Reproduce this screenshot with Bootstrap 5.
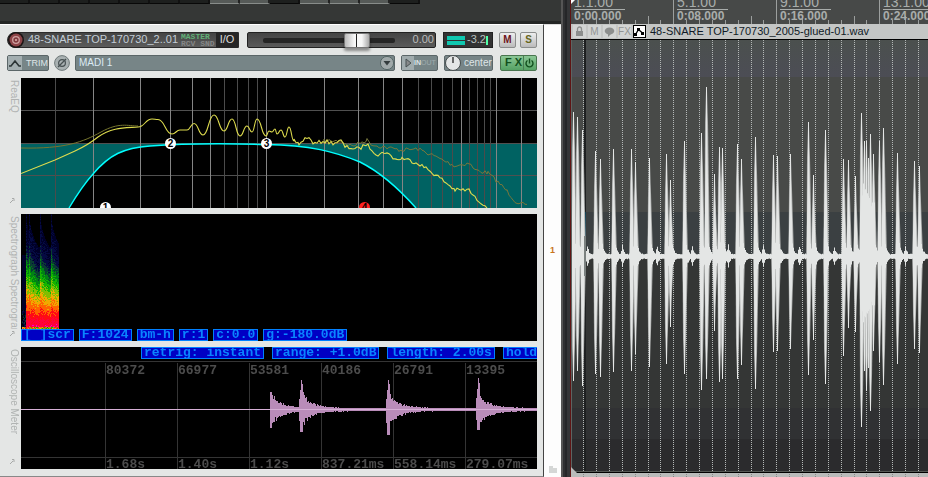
<!DOCTYPE html>
<html lang="en">
<head>
<meta charset="utf-8">
<meta name="viewport" content="width=device-width, initial-scale=1">
<title>48-SNARE TOP</title>
<link href="https://cdn.jsdelivr.net/npm/bootstrap@5.3.0/dist/css/bootstrap.min.css" rel="stylesheet">
<style>
body{font-family:"Liberation Sans",Arial,sans-serif;font-size:11px;line-height:1.2;background:#333534;overflow:hidden}
svg{display:block}
button,select{font:inherit;border:0;padding:0}
.daw{display:grid;grid-template-columns:minmax(0,561fr) 10px minmax(0,357fr);min-height:100vh}
.topbar{height:24px;background:#353736;border-bottom:3px solid #242625}
.cells span{width:30px;height:4px;background:#1d1f1e;border-right:2px solid #111;border-bottom:1px solid #080808}
.cells span.lit{background:#565a58;border-right-color:#222;border-bottom-color:#888c8a}
.tcp{background:#e4e6e5;border-right:1px solid #444;border-bottom:1px solid #888;padding:7px 6px 7px 7px;border-top:1px solid #fff}
.ctl{height:16px}
.row-a{margin-bottom:7px}
.row-b{margin-bottom:7px}
.namebox{width:232px;background:linear-gradient(#444,#5c5c5c);border:1px solid #2c2c2c;border-radius:8px 0 0 8px;color:#c3cdd6}
.rec{width:16px;height:16px;border-radius:50%;background:#1b1414}
.pix{font:bold 8px/7px "Liberation Mono",monospace;color:#62b077;width:35px;white-space:nowrap}
.pix span{color:#858787}
.io{width:22px;height:16px;background:#262626;color:#dcdcdc}
.fader{background:linear-gradient(#444,#5a5a5a);border:1px solid #222;border-radius:2px;padding-left:15px;color:#bcbcbc;padding-right:1px}
.fader input{appearance:none;background:transparent;width:132px;height:16px;margin:0}
.fader input::-webkit-slider-runnable-track{height:5px;background:#252525;border-radius:2px}
.fader input::-webkit-slider-thumb{appearance:none;width:26px;height:15px;margin-top:-5px;border:1px solid #777;border-radius:2px;background:linear-gradient(90deg,#bbb,#f7f7f7 40%,#f7f7f7 46%,#222 47%,#222 51%,#f7f7f7 52%,#f7f7f7 70%,#aaa);box-shadow:0 3px 3px rgba(0,0,0,.4)}
.meter{width:50px;background:#333;border:1px solid #222;color:#b9c1c1;padding:0 4px 0 3px;margin:0 6px 0 7px}
.meter i{width:18px;height:9px;flex:none;background:linear-gradient(#10c8b0 44%,#333 44%,#333 56%,#10c8b0 56%)}
.meter b{width:2px;height:9px;flex:none;background:#4fffa8}
.sq{width:17px;border:1px solid #8b8d8c;border-radius:2px;background:linear-gradient(#eee,#bbb);font-weight:bold;font-size:10px}
.sq.mute{color:#6d1420}.sq.solo{color:#66661c}
.grey{background:#778587;border:1px solid #5b6668;border-radius:2px;color:#dfe6e7;font-size:10px}
.grey svg{flex:none}
.trim{width:42px;font-size:9px}
.trim svg{background:#a3aeb0}
.inout{width:37px;margin:0 6px;font-size:7px}
.outlbl{opacity:.4}
.inselect{appearance:none;width:100%;background:transparent;color:#dceaf3;padding-left:3px;outline:0}
.inarrow{position:absolute;right:0;top:0;pointer-events:none}
.centre{width:49px}
.pl2{padding-left:2px}
.fx{width:37px;margin-left:7px;background:linear-gradient(#8bc795,#55a264);border:1px solid #49754f;border-radius:2px;color:#12501d;font-weight:bold}
.plots{gap:6px}
.plot{background:#000;overflow:hidden}
.side{width:14px;padding:2px 0 3px;color:#b0b3b2;font-size:10px}
.side span{writing-mode:vertical-rl;line-height:14px;white-space:nowrap;overflow:hidden;min-height:0}
.side svg{flex:none}
.p-eq{height:130px}.p-sp{height:127px}.p-os{height:122px}
.tags-a{gap:5px}
.tags-b{gap:8px;padding-left:120px}
.term{font:bold 13px/10px "Liberation Mono","Courier New",monospace;background:#0000c4;border:1px solid #0080ff;color:#0a84ff;height:12px;padding:0 2px;white-space:pre;flex:none}
.mono{font:bold 13px "Liberation Mono",monospace;fill:#4c4c4c}
.num{width:17px;background:#fdfdfd;color:#c8741c;font-weight:bold;font-size:9px;border-top:1px solid #ddd;padding-bottom:1px}
.split{background:linear-gradient(90deg,#555 0 2px,#2f3032 2px 4px,#252628 4px 6px,#343537 6px 9px,#5e1414 9px)}
.ruler{height:24px;background:#474948;overflow:hidden}
.ruler text{font-family:"Liberation Sans",sans-serif;fill:#a9adab}
.itemhead{height:15px;background:#c4c6c5;color:#101a26;gap:2px;padding-left:2px;white-space:nowrap;overflow:hidden}
.chip{width:13px;height:13px;flex:none;background:#d2d4d3;color:#929493;line-height:13px;text-align:center;font-size:10px}
.chip.on{background:#fff;border:1px solid #000}
.wave{border-top:1px solid #000;overflow:hidden}
</style>
<script src="https://cdn.jsdelivr.net/npm/bootstrap@5.3.0/dist/js/bootstrap.bundle.min.js"></script>
</head>
<body>
<main class="daw">
<section class="d-flex flex-column">
  <div class="topbar"><div class="cells d-flex"><span></span><span></span><span></span><span></span><span></span><span></span><span></span><span class="lit"></span><span class="lit"></span><span></span><span class="lit"></span><span class="lit"></span><span class="lit"></span><span></span></div></div>
  <div class="d-flex flex-grow-1">
    <div class="tcp flex-grow-1 d-flex flex-column">
      <div class="row-a d-flex align-items-center">
        <div class="namebox ctl d-flex align-items-center">
          <button class="rec flex-shrink-0" aria-label="Record arm"><svg width="16" height="16" viewBox="0 0 16 16"><circle cx="8" cy="8" r="6.5" fill="#8d4347"/><circle cx="8" cy="8" r="3.3" fill="#823b3f" stroke="#cfa0a0" stroke-width="1.3"/><circle cx="8" cy="8" r="1" fill="#e0b8b8"/></svg></button>
          <span class="flex-grow-1 ps-1 text-nowrap">48-SNARE TOP-170730_2..01</span>
          <span class="pix">MASTER<br><span>RCV SND</span></span>
          <button class="io">I/O</button>
        </div>
        <div class="fader ctl flex-grow-1 d-flex align-items-center justify-content-between ms-2"><input type="range" min="0" max="100" value="76" aria-label="Volume"><span>0.00</span></div>
        <div class="meter ctl d-flex align-items-center"><i></i><span class="pl2">-3.2</span><b></b></div>
        <button class="sq mute ctl me-1">M</button><button class="sq solo ctl">S</button>
      </div>
      <div class="row-b d-flex align-items-center">
        <button class="grey trim ctl d-flex align-items-center"><svg width="14" height="14" viewBox="0 0 14 14"><path d="M1 10h2l4-5 4 5h2" fill="none" stroke="#2b3435" stroke-width="1.6"/></svg><span class="ps-1">TRIM</span></button>
        <button class="bg-transparent mx-1" aria-label="Phase"><svg width="18" height="16" viewBox="0 0 18 16"><circle cx="9" cy="8" r="7.4" fill="#a9b1b2" stroke="#6f797a"/><circle cx="9" cy="8" r="3.4" fill="none" stroke="#475052" stroke-width="1.2"/><path d="M5 12l8-8" stroke="#475052" stroke-width="1.2"/></svg></button>
        <div class="grey ctl flex-grow-1 position-relative d-flex"><select class="inselect" aria-label="Input"><option>MADI 1</option></select><svg class="inarrow" width="14" height="14" viewBox="0 0 14 14"><circle cx="7" cy="7" r="6.6" fill="#a0a9aa" stroke="#566"/><path d="M3.5 5h7l-3.500 4.500z" fill="#333c3d"/></svg></div>
        <button class="grey inout ctl d-flex align-items-center"><svg width="12" height="14" viewBox="1 0 12 14"><path fill="#a0abad" d="M0 0h14v14H0z"/><path d="M5 3l5 4-5 4z" fill="#87898a" stroke="#475052"/></svg><b>IN</b><span class="outlbl">OUT</span></button>
        <div class="grey centre ctl d-flex align-items-center"><svg width="17" height="16" viewBox="0 0 17 16"><circle cx="8" cy="8" r="7.500" fill="#e4e6e6" stroke="#474d4e"/><path d="M8 2v6" stroke="#111" stroke-width="1.2"/></svg><span class="pl2">center</span></div>
        <button class="fx ctl d-flex align-items-center justify-content-between"><span class="ps-1">F X</span><svg width="13" height="14" viewBox="0 0 13 14"><path d="M.5 0v14" stroke="#497d52"/><path d="M4.500 4.500a3.500 3.500 0 1 0 4 0M6.500 2.500v5" fill="none" stroke="#12501d" stroke-width="1.4"/></svg></button>
      </div>
      <div class="plots d-flex flex-column flex-grow-1">
        <div class="p-eq d-flex">
          <div class="side d-flex flex-column justify-content-between"><span>ReaEQ</span><svg width="10" height="9" viewBox="0 0 10 9"><path d="M3 7l3-3M5 2.500h2V5" stroke="#a7a9a8" fill="none"/></svg></div>
          <div class="plot flex-grow-1"><svg id="eq" width="100%" height="130" viewBox="21 78 516 130" preserveAspectRatio="xMinYMin slice"></svg></div>
        </div>
        <div class="p-sp d-flex">
          <div class="side d-flex flex-column justify-content-between"><span>Spectrograph Spectrogram</span><svg width="10" height="9" viewBox="0 0 10 9"><path d="M3 7l3-3M5 2.500h2V5" stroke="#a7a9a8" fill="none"/></svg></div>
          <div class="plot flex-grow-1 d-flex flex-column justify-content-between align-items-start"><canvas id="spec" width="38" height="115"></canvas>
            <div class="tags-a d-flex"><button class="term">[ ]scr</button><button class="term">F:1024</button><button class="term">bm-h</button><button class="term">r:1</button><button class="term">c:0.0</button><button class="term">g:-180.0dB</button></div></div>
        </div>
        <div class="p-os d-flex">
          <div class="side d-flex flex-column justify-content-between"><span>Oscilloscope Meter</span><svg width="10" height="9" viewBox="0 0 10 9"><path d="M3 7l3-3M5 2.500h2V5" stroke="#a7a9a8" fill="none"/></svg></div>
          <div class="plot w-0 flex-grow-1 d-flex flex-column" style="width:0"><div class="tags-b d-flex"><button class="term">retrig: instant</button><button class="term">range: +1.0dB</button><button class="term">length: 2.00s</button><button class="term">hold</button></div>
            <svg id="osc" width="100%" height="110" viewBox="21 359 516 110" preserveAspectRatio="xMinYMin slice"></svg></div>
        </div>
      </div>
    </div>
    <div class="num d-flex flex-column align-items-center justify-content-between"><svg width="8" height="10"></svg><span>1</span><svg width="8" height="10" viewBox="0 0 8 10"><path d="M0 0h4v2h4v5H0z" fill="#d5d7d6"/></svg></div>
  </div>
</section>
<div class="split"></div>
<section class="d-flex flex-column">
  <div class="ruler"><svg id="ruler" width="100%" height="24" viewBox="571 0 357 24" preserveAspectRatio="xMinYMin slice"></svg></div>
  <div class="itemhead d-flex align-items-center">
    <span class="chip"><svg width="13" height="13" viewBox="0 0 13 13"><path d="M3 6h7v5H3z" fill="#8c8e8d"/><path d="M4.500 6V4a2 2 0 0 1 4 0v2" fill="none" stroke="#8c8e8d" stroke-width="1.3"/></svg></span><span class="chip">M</span><span class="chip"><svg width="13" height="13" viewBox="0 0 13 13"><ellipse cx="6.500" cy="6" rx="4.800" ry="3.500" fill="#8c8e8d"/><path d="M5 8v4l4-4z" fill="#8c8e8d"/></svg></span><span class="chip">FX</span><span class="chip on"><svg width="11" height="11" viewBox="0 0 11 11"><path d="M1.500 8.500l3-5 4 3.500" stroke="#000" stroke-width="1.300" fill="none"/><path d="M0 7h3v3H0zM3 2h3v3H3zM7 6h3v3H7z"/></svg></span><span class="pl2">48-SNARE TOP-170730_2005-glued-01.wav</span>
  </div>
  <div class="wave flex-grow-1 d-flex"><svg id="wave" width="100%" height="437" viewBox="571 40 357 437" preserveAspectRatio="xMinYMin slice"></svg></div>
</section>
</main>
<script>
const $=id=>document.getElementById(id);
let seed=7;const rnd=()=>(seed=(seed*16807)%2147483647)/2147483647;
const rect=(x,y,w,h,f,o='')=>`<rect x="${x}" y="${y}" width="${w}" height="${h}" fill="${f}" ${o}/>`;

// Equaliser
{
 const curve='C75 198 84 184 93 174C110 154 124 148 150 146C190 143 230 143.500 266 144.500C310 145 335 152 360 162C380 172 400 190 416 208';
 let s=`<path d="M21 143H537V208H416C400 190 380 172 360 162C335 152 310 145 266 144.500C230 143.500 190 143 150 146C124 148 110 154 93 174C84 184 75 198 69 208H21Z" fill="#006262"/>`;
 [110,143,175].forEach(y=>s+=rect(21,y,516,1,'#505050'));
 [55,224,237,248,257,418,431,442,452,469,477,484,490].forEach(x=>s+=rect(x,78,1,130,'#4b4b4b'));
 [93,140,170,192,210,266,324,358,383,402,461,496,521].forEach(x=>s+=rect(x,78,1,130,'#858585'));
 const smooth=p=>{let d='';for(let i=1;i<p.length;i++){const[a,b]=p[i-1],[c,e]=p[i],m=(a+c)/2;d+=`C${m} ${b} ${m} ${e} ${c} ${e}`}return d};
 const rough=p=>{let d='';for(let i=1;i<p.length;i++){const[a,b]=p[i-1],[c,e]=p[i];for(let x=a;x<c;x+=2)d+=`L${x} ${b+(e-b)*(x-a)/(c-a)+(rnd()-.5)*4}`}return d};
 const mid=[[138,127],[152,119],[158,119.5],[172,134],[180,130],[187,130],[194,123.5],[203,135],[214,115],[224,131],[232,119],[240,136],[247,126],[252,132],[257,119],[266,136],[269,131],[272,132],[275,129],[277,134],[281,130],[285,137],[289,127],[294,141]];
 const tail=[[294,141],[299,144],[307,137],[315,144],[323,141],[333,143],[341,141],[345,147],[359,149],[366,144],[378,155],[385,152],[397,160],[402,158],[418,163],[430,171],[440,178],[455,190],[469,190],[475,198],[488,207]];
 const olive=[[324,141],[340,141],[352,146],[367,140],[373,145],[400,150],[418,149],[432,155],[455,166],[469,163],[475,170],[488,173],[500,184],[507,191],[515,201],[529,207]];
 s+=`<path d="M21 148C65 149 83 142 101 132S128 126 138 126" fill="none" stroke="#77762f"/><path d="M${olive[0]}${rough(olive)}" fill="none" stroke="#77773c"/>`;
 s+=`<path d="M69 208${curve}" fill="none" stroke="#0ff" stroke-width="1.4"/>`;
 s+=`<path d="M21 173.500L55 160L75 151Q88 145 98 137C112 127 125 128 138 127${smooth(mid)}${rough(tail)}" fill="none" stroke="#dedc4e" stroke-width="1.1"/>`;
 [[105,207,1,'#fff'],[170,143,2,'#fff'],[266,143,3,'#fff'],[364,207,4,'#ff2020']].forEach(([x,y,n,c])=>s+=`<circle cx="${x+.5}" cy="${y+.5}" r="5.500" fill="${c}"/><text x="${x+.5}" y="${y+4}" text-anchor="middle" font-family="Liberation Sans" font-weight="bold" font-size="10" fill="#000">${n}</text>`);
 $('eq').innerHTML=s;
}

// Spectrogram heat map
{
 const c=$('spec').getContext('2d'),on=[5,8,19,30];
 const ramp=[[0,0,0],[0,0,40],[5,10,66],[10,60,50],[0,130,20],[20,180,0],[130,190,0],[240,170,0],[255,100,0],[255,10,20],[255,0,60],[255,0,200]];
 for(let x=1;x<38;x++)for(let y=0;y<115;y++){
  let o=on.filter(v=>v<=x).pop(),v;
  if(o===undefined)v=y>95?3*rnd():y>40?1:0;
  else{
   const d=x-o,h=y/115,k=Math.min(1,Math.sqrt(d/9));
   const edge=.28*k,g=.27+.2*k;
   v=h<edge?0:h<g?1+(h-edge)/(g-edge+.01):2.2+(h-g)/(1-g)*8.4;
   if(h>=edge)v+=(rnd()-.5)*1.1;
  }
  if(y>112)v=4+rnd()*6;
  const q=ramp[Math.max(0,Math.min(11,Math.round(v)))];c.fillStyle=`rgb(${q})`;c.fillRect(x,y,1,1);
 }
}

// Oscilloscope
{
 let s=rect(21,361,516,1,'#343434')+rect(21,457,516,1,'#343434');
 [[105,'80372','1.68s'],[177,'66977','1.40s'],[249,'53581','1.12s'],[321,'40186','837.21ms'],[393,'26791','558.14ms'],[465,'13395','279.07ms']].forEach(([x,a,b])=>s+=rect(x,363,1,106,'#343434')+`<text class="mono" x="${x+1}" y="374">${a}</text><text class="mono" x="${x+1}" y="468">${b}</text>`);
 const hits=[[270,17,18],[301,29,22],[388,29,25],[478,31,20]];
 for(let x=270;x<537;x++){
  const h=hits.filter(v=>v[0]-2<=x).pop()||hits[0],d=x-h[0];let u,w;
  if(d<0&&h[0]>270){u=h[1]*(d==-1?.65:.35);w=h[2]*(d==-1?1:.5)}
  else if(d<2){u=h[1]*(d==1&&h[0]>270?.85:1);w=h[2]}
  else{const e=11*Math.exp(-d/12)+7*Math.exp(-d/3)+1;u=e*(.75+rnd()*.5);w=e*(.75+rnd()*.5)}
  s+=rect(x,409-Math.round(u),1,Math.round(u)+Math.round(w)+1,'#b98cb9');
 }
 $('osc').innerHTML=s+rect(21,409,516,1,'#d6b0d6');
}

// Ruler
const step=12.87,grid=k=>Math.round(570.4+step*k);
{
 let s='';
 for(let k=1;k<28;k++)s+=rect(grid(k),k%8==0?0:k%4==2?16:20,1,24,'#9c9f9e');
 [[571,'1.1.00','0:00.000'],[674,'5.1.00','0:08.000'],[777,'9.1.00','0:16.000'],[880,'13.1.00','0:24.000']].forEach(([x,a,b])=>s+=`<text x="${x+3}" y="7" font-size="14">${a}</text><text x="${x+3}" y="20" font-size="12" font-weight="bold">${b}</text>`+rect(x+3,9,51,1,'#a9adab'));
 $('ruler').innerHTML=s+'<path d="M571 0h4l-4 4z" fill="#fff"/>';
}

// Arrange waveform
{
 let s='<defs><linearGradient id="g" x1="0" y1="0" x2="0" y2="1"><stop offset="0" stop-color="#4b504e"/><stop offset="1" stop-color="#4c4d55"/></linearGradient></defs>';
 s+=rect(571,40,357,37,'url(#g)')+rect(571,77,357,135,'#484a48')+rect(571,212,357,44,'#3b4042')+rect(571,256,357,152,'#343635')+rect(571,408,357,31,'#303133')+rect(571,439,357,33,'#2b2b2d');
 for(let k=1;k<28;k++)s+=`<path d="M${grid(k)+.5} 40V477" stroke="#b4b8b7" stroke-dasharray="1 1"/>`;
 s+=rect(584,40,2,437,'#1e2021')+rect(584,212,2,30,'#083b50');
 const P=[[571,160,362],[573,112,381],[577,117,371],[582,130,386],[595,151,374],[600,159,377],[613,149,372],[631,149,371],[635,162,354],[649,158,367],[666,154,364],[670,180,327],[684,141,374],[701,133,390],[706,87,379],[714,174,331],[719,147,382],[722,148,379],[737,144,379],[741,159,365],[755,137,389],[773,155,352],[777,156,351],[790,154,349],[808,122,375],[813,175,340],[825,130,384],[843,159,356],[848,160,328],[855,176,332],[861,113,427],[864,141,371],[866,141,391],[868,158,368],[870,134,411],[873,154,351],[879,141,362],[883,128,385],[897,153,364],[914,161,349],[919,166,353]];
 P.forEach(([x,t,b])=>{s+=`<path d="M${x-1.5} 256L${x-1} ${t+35}L${x} ${t+4}h1L${x+2} ${t+35}L${x+4} 256L${x+2} ${b-35}L${x+1} ${b-4}h-1L${x-1} ${b-35}Z" fill="#a6a8a7"/><path d="M${x-1.5} 256L${x} ${t+25}V${t}h1V${t+25}L${x+3} 256L${x+1} ${b-25}V${b}h-1V${b-25}Z" fill="#e4e6e5"/>`});
 let up='',dn=[];
 for(let x=571;x<928;x++){
  let a=2;P.forEach(([p])=>{const d=x-p;if(d>=-1)a=Math.max(a,24*Math.exp(-Math.abs(d)/2.7));});
  [587,622,657,692,728,763,799,834,905].forEach(p=>{const d=x-p;if(d>=-1)a=Math.max(a,10*Math.exp(-Math.abs(d)/2))});
  if(x>860&&x<875)a=50+rnd()*20;
  a=Math.min(a,80)*(.8+rnd()*.4);
  up+=`L${x} ${256-a}L${x+1} ${256-a}`;dn.unshift(`L${x+1} ${257+a*.9}L${x} ${257+a*.9}`);
 }
 s+=`<path d="M571 256${up}${dn.join('')}Z" fill="#e4e6e5"/>`;
 s+=rect(584,236,2,40,'#7b8180')+rect(571,471,357,1,'#555955')+rect(571,472,357,1,'#000')+rect(571,473,357,4,'#b9bbba')+rect(571,40,1,432,'#5d6462')+'<path d="M571 467l6 6h-6z" fill="#bbb"/>';
 for(let k=1;k<28;k++)s+=rect(grid(k),474,1,1,'#888')+rect(grid(k),476,1,1,'#888');
 $('wave').innerHTML=s;
}
</script>
</body>
</html>
